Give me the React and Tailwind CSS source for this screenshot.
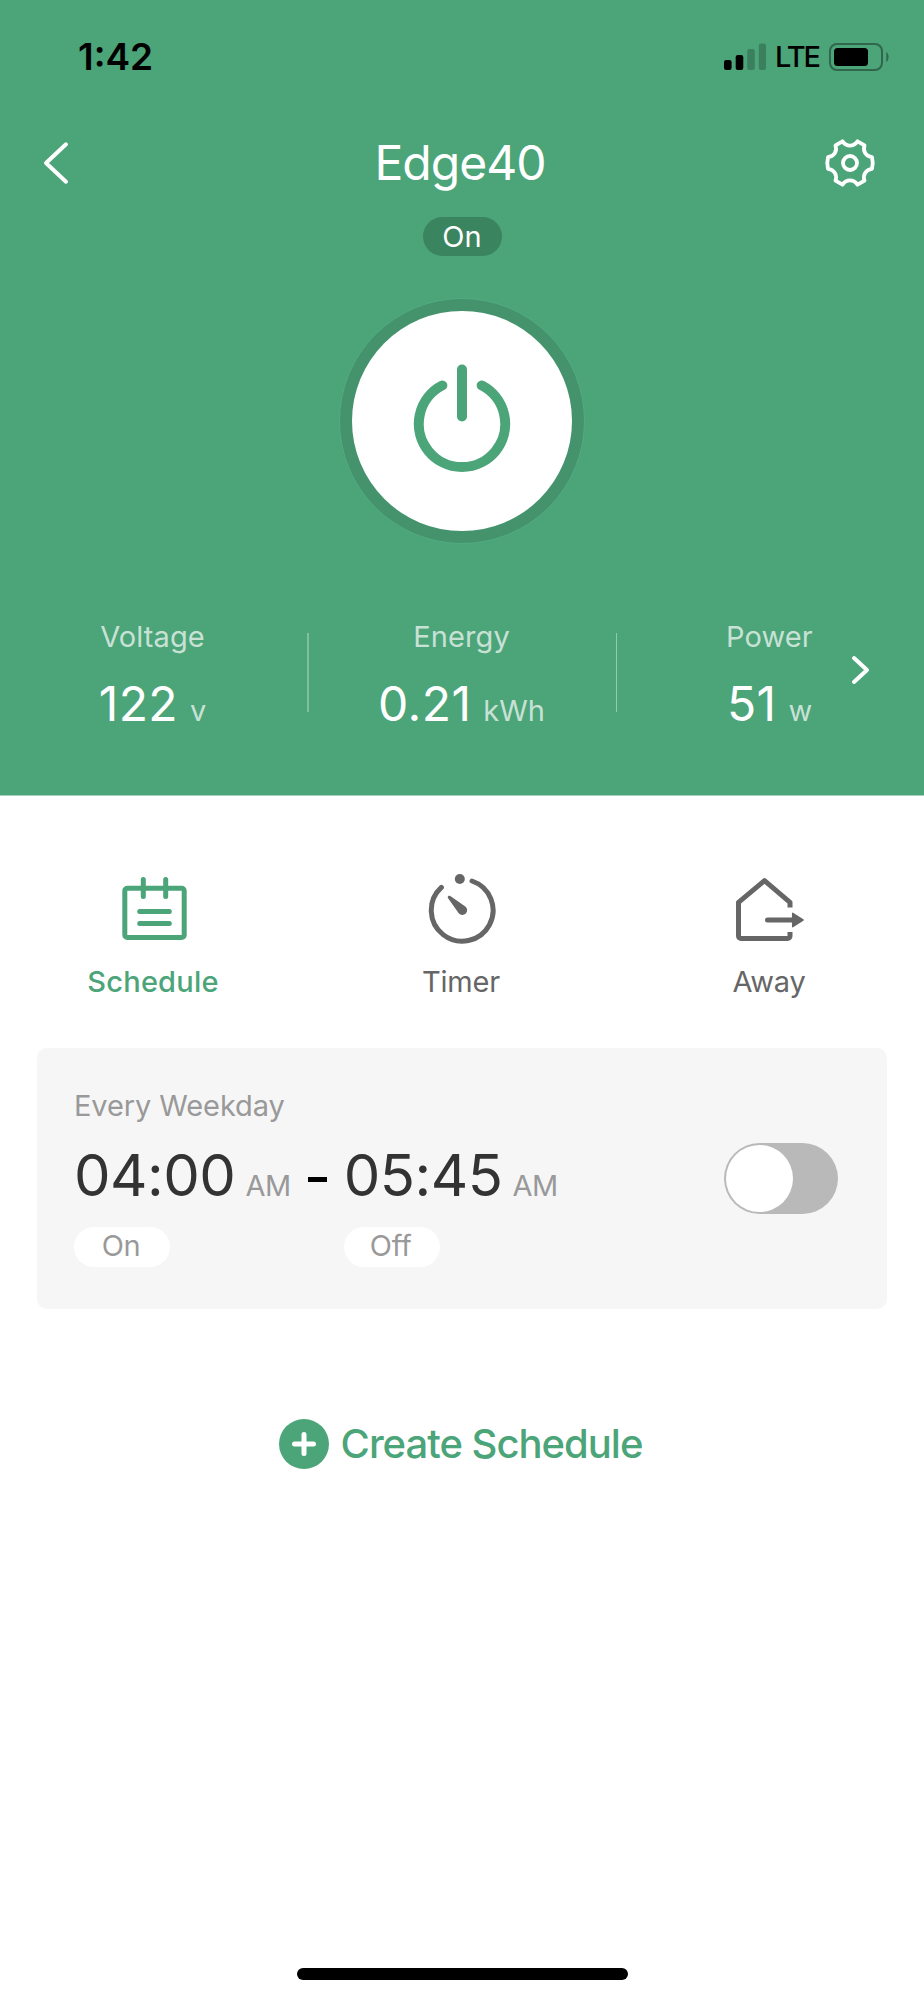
// src/App.jsx
import React, { useState } from 'react';
import { clsx } from 'clsx';

const STATS = [
    { label: 'Voltage', value: '122', unit: 'v' },
    { label: 'Energy', value: '0.21', unit: 'kWh' },
    { label: 'Power', value: '51', unit: 'w' },
];

function StatusBar() {
    return (
        <div className="flex h-[113px] items-center justify-between pl-[78px] pr-[34px] text-black">
            <span className="text-[37px] font-semibold leading-none">1:42</span>
            <div className="flex items-center">
                <svg width="42" height="28" viewBox="0 0 42 28">
                    <rect x="0" y="17" width="7.6" height="10" rx="2.2" />
                    <rect x="11.7" y="12" width="7.6" height="15" rx="2.2" />
                    <rect x="23.2" y="6" width="7.6" height="21" rx="2.2" fillOpacity="0.22" />
                    <rect x="34.8" y="0.5" width="7.2" height="26.5" rx="2.2" fillOpacity="0.22" />
                </svg>
                <span className="ml-[9px] w-[54px] text-[29px] font-medium leading-none tracking-[-2px]">LTE</span>
                <svg width="61" height="28" viewBox="0 0 61 28">
                    <rect x="1" y="1" width="52" height="26" rx="7" fill="none" stroke="#2f664c" strokeWidth="2" />
                    <rect x="5" y="5" width="34" height="18" rx="3.5" />
                    <path d="M57.3 9c3 1.6 3 8.400 0 10z" fill="#2f664c" />
                </svg>
            </div>
        </div>
    );
}

function PowerButton() {
    return (
        <button className="mt-[42px] flex size-[246px] items-center justify-center rounded-full border border-[#52ac81] bg-[#44936d]">
            <span className="flex size-[220px] items-center justify-center rounded-full bg-white">
                <svg width="110" height="120" viewBox="0 0 110 120" fill="none" stroke="#4ca479" strokeWidth="10" strokeLinecap="round">
                    <path d="M35.300 24.400A43.200 43.200 0 1 0 74.700 24.400" />
                    <path d="M55 8.500v47" />
                </svg>
            </span>
        </button>
    );
}

function Stat({ label, value, unit }) {
    return (
        <div className="flex flex-1 flex-col items-center pr-0.5">
            <span className="h-10 text-[29px] leading-10 tracking-[0.1px] text-white/70">{label}</span>
            <span className="mt-[15px] flex h-16 items-baseline text-[48px] leading-[64px] tracking-[0.4px] text-white">
                {value}
                <span className="ml-3 text-[29px] tracking-normal text-white/70">{unit}</span>
            </span>
        </div>
    );
}

function CalendarIcon() {
    return (
        <svg width="80" height="76" viewBox="0 0 80 76" fill="none" stroke="currentColor" strokeWidth="5" strokeLinecap="round">
            <rect x="10.800" y="18.300" width="59.400" height="49.200" rx="2.500" />
            <path d="M29.300 9.500v17M51.700 9.500v17M25.700 41.500h29.600M25.700 53.500h29.600" />
        </svg>
    );
}

function TimerIcon() {
    return (
        <svg width="80" height="76" viewBox="0 0 80 76" fill="none" stroke="currentColor" strokeWidth="5" strokeLinecap="round">
            <path d="M50 11A30.900 30.900 0 1 1 19.400 17.400" />
            <circle cx="37.800" cy="9" r="5" fill="currentColor" stroke="none" />
            <path d="M26.200 26.200c.6-.6 1.400-.6 2.100-.1L43.300 36.400A4.800 4.800 0 1 1 36.700 43.300L26.100 28.200c-.5-.7-.5-1.400.1-2z" fill="currentColor" stroke="none" />
        </svg>
    );
}

function AwayIcon() {
    return (
        <svg width="80" height="76" viewBox="0 0 80 76" fill="none" stroke="currentColor" strokeWidth="5" strokeLinejoin="round">
            <path d="M60 37.500V32.300L34.500 10.700 8.500 32.300V66a2.500 2.500 0 0 0 2.500 2.500H57.500a2.500 2.500 0 0 0 2.500-2.500V62" />
            <path d="M37.500 50H64" strokeLinecap="round" />
            <path d="M62.700 43.300v13.400L73 50z" fill="currentColor" strokeWidth="1.500" />
        </svg>
    );
}

const TABS = [
    { id: 'schedule', label: 'Schedule', Icon: CalendarIcon },
    { id: 'timer', label: 'Timer', Icon: TimerIcon },
    { id: 'away', label: 'Away', Icon: AwayIcon },
];

function TimePoint({ time, period, action }) {
    return (
        <div className="flex flex-col items-start">
            <span className="flex h-[72px] items-baseline text-[58px] leading-[72px] tracking-[-0.5px] text-[#333]">
                {time}
                <span className="ml-2.5 text-[29px] text-[#999]">{period}</span>
            </span>
            <span className="mt-4 h-10 w-24 rounded-full bg-white pr-0.5 text-center text-[29px] leading-[38px] tracking-[-0.3px] text-[#999]">{action}</span>
        </div>
    );
}

export default function App() {
    const [tab, setTab] = useState('schedule');
    const [enabled, setEnabled] = useState(false);

    return (
        <div className="flex h-[2000px] w-[924px] flex-col overflow-hidden bg-white font-['Inter',sans-serif]">
            <header className="h-[796px] shrink-0 border-b border-[#a5d1bc] bg-[#4ca479]">
                <StatusBar />

                <div className="flex h-[99px] items-center justify-between pl-[41px] pr-[48px]">
                    <svg width="52" height="46" viewBox="0 0 52 46" fill="none" stroke="#fff" strokeWidth="4" strokeLinecap="round" strokeLinejoin="round">
                        <path d="M25 4.300L5 23l20 18.700" />
                    </svg>
                    <h1 className="pl-[3px] pt-px text-[48px] leading-none tracking-[-1px] text-white">Edge40</h1>
                    <svg width="52" height="50" viewBox="0 0 52 50" fill="none" stroke="#fff" strokeWidth="3.800" strokeLinejoin="round">
                        <path d="M18.500 3.300L11.500 7.300C13.500 13.500 10 18.500 4 19.200Q2.500 25 4 30.800C10 31.500 13.500 36.500 11.500 42.700L18.500 46.700C22.500 41 29.500 41 33.500 46.700L40.500 42.700C38.500 36.500 42 31.500 48 30.800Q49.500 25 48 19.200C42 18.500 38.500 13.500 40.500 7.300L33.500 3.300C29.500 9 22.500 9 18.500 3.300Z" />
                        <circle cx="26" cy="25" r="7" />
                    </svg>
                </div>

                <div className="mt-[5px] flex flex-col items-center">
                    <span className="h-[39px] w-[79px] rounded-full bg-[#3b8460] text-center text-[29px] leading-[39px] text-white">On</span>
                    <PowerButton />
                </div>

                <div className="relative mt-[73px] flex">
                    <Stat {...STATS[0]} />
                    <div className="mt-4 h-[79px] w-0.5 bg-white/30" />
                    <Stat {...STATS[1]} />
                    <div className="mt-4 h-[79px] w-px bg-white/40" />
                    <Stat {...STATS[2]} />
                    <svg className="absolute right-[52px] top-[37px]" width="22" height="32" viewBox="0 0 22 32" fill="none" stroke="#fff" strokeWidth="4" strokeLinecap="round" strokeLinejoin="round">
                        <path d="M4 4l13 12L4 28" />
                    </svg>
                </div>
            </header>

            <nav className="mt-[74px] flex">
                {TABS.map(({ id, label, Icon }) => (
                    <button
                        key={id}
                        onClick={() => setTab(id)}
                        className={clsx("flex flex-1 flex-col items-center text-[29px]", tab === id ? "font-medium tracking-[0.2px] text-[#4ca479]" : "tracking-[-0.2px] text-[#666]")}
                    >
                        <Icon />
                        <span className="mt-4 h-10 pr-0.5 leading-10">{label}</span>
                    </button>
                ))}
            </nav>

            <section className="mx-[37px] mt-[46px] flex h-[261px] items-center justify-between rounded-[10px] bg-[#f6f6f6] pl-[37px] pr-[49px]">
                <div className="flex flex-col self-start pt-[38px]">
                    <span className="h-10 text-[29px] leading-10 tracking-[-0.1px] text-[#999]">Every Weekday</span>
                    <div className="mt-[13px] flex">
                        <TimePoint time="04:00" period="AM" action="On" />
                        <span className="mx-[17px] mt-[38px] h-[5px] w-[19px] bg-black" />
                        <TimePoint time="05:45" period="AM" action="Off" />
                    </div>
                </div>
                <button
                    onClick={() => setEnabled(!enabled)}
                    className={clsx("flex h-[71px] w-[114px] items-center rounded-full px-0.5", enabled ? "justify-end bg-[#4ca479]" : "bg-[#b9b9b9]")}
                >
                    <span className="size-[67px] rounded-full bg-white" />
                </button>
            </section>

            <button className="mt-[110px] flex items-center justify-center gap-3 pr-[3px] text-[40px] font-medium leading-[50px] tracking-[-1px] text-[#4ca479]">
                <svg width="50" height="50" viewBox="0 0 50 50">
                    <circle cx="25" cy="25" r="25" fill="#4ca479" />
                    <path d="M25 15.500v19M15.500 25h19" stroke="#fff" strokeWidth="5" strokeLinecap="round" />
                </svg>
                Create Schedule
            </button>

            <div className="mx-auto mb-5 mt-auto h-3 w-[331px] rounded-full bg-black" />
        </div>
    );
}
